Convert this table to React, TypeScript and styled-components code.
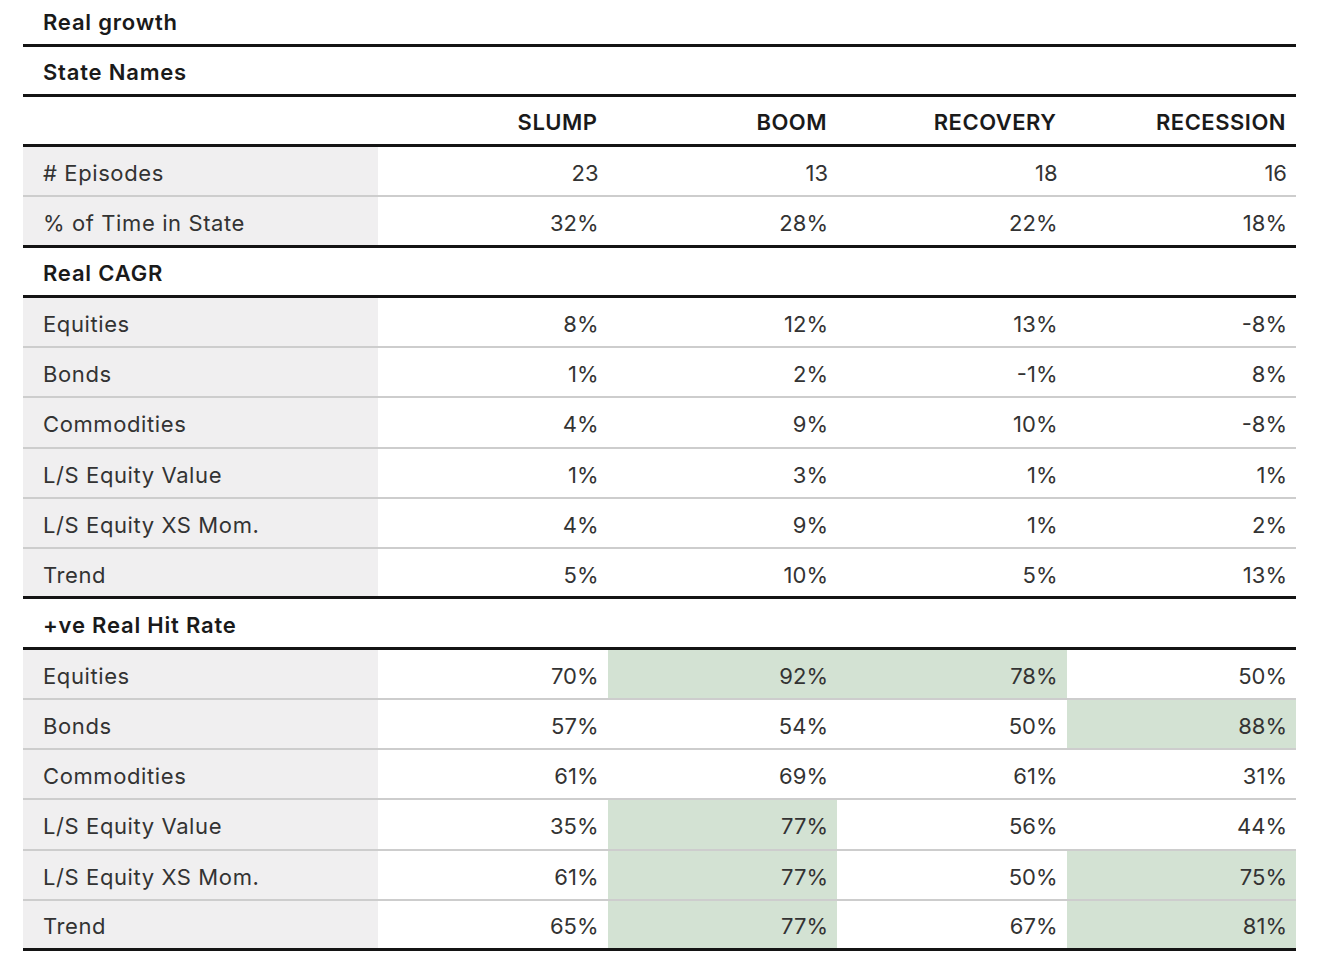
import styled, { createGlobalStyle } from "styled-components";

const GlobalStyle = createGlobalStyle`
  html, body {
    margin: 0;
    padding: 0;
    background: #ffffff;
  }
  body {
    font-family: "Inter", "Noto Sans", Arial, sans-serif;
    color: #2b2b2b;
  }
`;

const Page = styled.div`
  padding: 0 40px 0 23px;
`;

const Table = styled.div`
  width: 1273px;
  display: flex;
  flex-direction: column;
`;

const Row = styled.div<{ line: "thick" | "thin"; first?: boolean }>`
  display: grid;
  grid-template-columns: 355px repeat(4, 1fr);
  box-sizing: border-box;
  height: ${(p) => (p.first ? "46.5px" : "50.25px")};
  border-bottom: ${(p) =>
    p.line === "thick" ? "3px solid #141414" : "2px solid #cdcdcd"};
`;

const Label = styled.div<{ shaded?: boolean; strong?: boolean; compact?: boolean }>`
  display: flex;
  align-items: center;
  padding: ${(p) => (p.compact ? "0" : "4px")} 0 0 20px;
  background: ${(p) => (p.shaded ? "#f0eff0" : "transparent")};
  font-size: 22px;
  font-weight: ${(p) => (p.strong ? 600 : 400)};
  letter-spacing: ${(p) => (p.strong ? "0.8px" : "0.6px")};
  color: ${(p) => (p.strong ? "#1a1a1a" : "#333333")};
`;

const Cell = styled.div<{ green?: boolean; head?: boolean }>`
  display: flex;
  align-items: center;
  justify-content: flex-end;
  padding: 4px ${(p) => (p.head ? "10px" : "9px")} 0 0;
  background: ${(p) => (p.green ? "#d3e2d3" : "transparent")};
  font-size: 22px;
  font-weight: ${(p) => (p.head ? 600 : 400)};
  letter-spacing: ${(p) => (p.head ? "0.5px" : "0")};
  color: ${(p) => (p.head ? "#1a1a1a" : "#333333")};
`;

const Spacer = styled.div``;

type DataRow = { label: string; values: string[]; green?: boolean[] };

const states = ["SLUMP", "BOOM", "RECOVERY", "RECESSION"];

const stateStats: DataRow[] = [
  { label: "# Episodes", values: ["23", "13", "18", "16"] },
  { label: "% of Time in State", values: ["32%", "28%", "22%", "18%"] },
];

const cagr: DataRow[] = [
  { label: "Equities", values: ["8%", "12%", "13%", "-8%"] },
  { label: "Bonds", values: ["1%", "2%", "-1%", "8%"] },
  { label: "Commodities", values: ["4%", "9%", "10%", "-8%"] },
  { label: "L/S Equity Value", values: ["1%", "3%", "1%", "1%"] },
  { label: "L/S Equity XS Mom.", values: ["4%", "9%", "1%", "2%"] },
  { label: "Trend", values: ["5%", "10%", "5%", "13%"] },
];

const hitRate: DataRow[] = [
  { label: "Equities", values: ["70%", "92%", "78%", "50%"], green: [false, true, true, false] },
  { label: "Bonds", values: ["57%", "54%", "50%", "88%"], green: [false, false, false, true] },
  { label: "Commodities", values: ["61%", "69%", "61%", "31%"] },
  { label: "L/S Equity Value", values: ["35%", "77%", "56%", "44%"], green: [false, true, false, false] },
  { label: "L/S Equity XS Mom.", values: ["61%", "77%", "50%", "75%"], green: [false, true, false, true] },
  { label: "Trend", values: ["65%", "77%", "67%", "81%"], green: [false, true, false, true] },
];

function SectionHeading({ title, first }: { title: string; first?: boolean }) {
  return (
    <Row line="thick" first={first}>
      <Label strong compact={first}>
        {title}
      </Label>
      <Spacer />
      <Spacer />
      <Spacer />
      <Spacer />
    </Row>
  );
}

function DataRows({ rows }: { rows: DataRow[] }) {
  return (
    <>
      {rows.map((r, i) => (
        <Row key={r.label} line={i === rows.length - 1 ? "thick" : "thin"}>
          <Label shaded>{r.label}</Label>
          {r.values.map((v, j) => (
            <Cell key={j} green={r.green?.[j]}>
              {v}
            </Cell>
          ))}
        </Row>
      ))}
    </>
  );
}

export default function App() {
  return (
    <Page>
      <GlobalStyle />
      <Table>
        <SectionHeading title="Real growth" first />
        <SectionHeading title="State Names" />
        <Row line="thick">
          <Spacer />
          {states.map((s) => (
            <Cell key={s} head>
              {s}
            </Cell>
          ))}
        </Row>
        <DataRows rows={stateStats} />
        <SectionHeading title="Real CAGR" />
        <DataRows rows={cagr} />
        <SectionHeading title="+ve Real Hit Rate" />
        <DataRows rows={hitRate} />
      </Table>
    </Page>
  );
}
